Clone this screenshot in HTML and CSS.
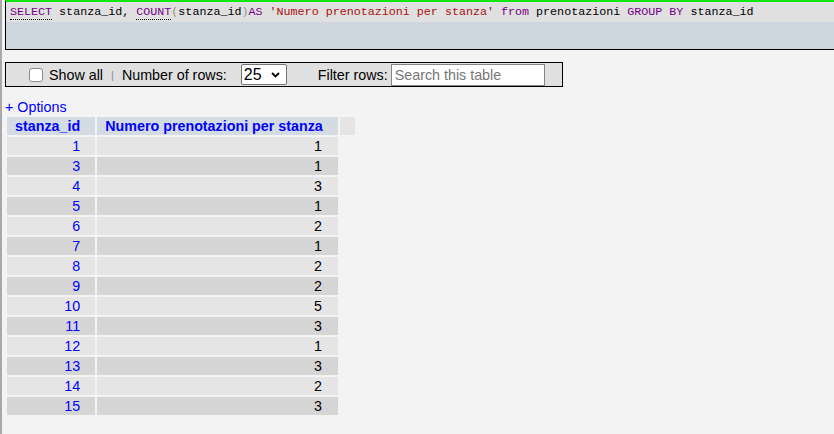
FILE: index.html
```html
<!DOCTYPE html>
<html lang="it">
<head>
<meta charset="utf-8">
<title>SQL result</title>
<link rel="stylesheet" href="styles.css">
</head>
<body>
<div class="page">
  <div class="sql">
    <div class="sql-code"><span class="kw doc">SELECT</span> stanza_id, <span class="kw doc">COUNT</span><span class="br">(</span>stanza_id<span class="br">)</span><span class="kw">AS</span> <span class="str">'Numero prenotazioni per stanza'</span> <span class="kw">from</span> prenotazioni <span class="kw">GROUP</span> <span class="kw">BY</span> stanza_id</div>
    <div class="sql-tools"></div>
  </div>

  <div class="toolbar">
    <input type="checkbox" class="chk" id="showall">
    <label for="showall" class="lbl">Show all</label>
    <span class="sep">|</span>
    <span class="lbl">Number of rows:</span>
    <span class="select-wrap">
      <select class="rows"><option>25</option></select>
      <svg class="chev" width="9" height="6" viewBox="0 0 9 6"><path d="M1 1 L4.5 4.5 L8 1" fill="none" stroke="#000" stroke-width="1.8"/></svg>
    </span>
    <span class="lbl filter">Filter rows:</span>
    <input type="text" class="search" placeholder="Search this table">
  </div>

  <div class="options"><a href="#">+ Options</a></div>

  <table class="result">
    <thead>
      <tr><th>stanza_id</th><th>Numero prenotazioni per stanza</th><th class="extra"></th></tr>
    </thead>
    <tbody>
      <tr><td class="id">1</td><td>1</td></tr>
      <tr><td class="id">3</td><td>1</td></tr>
      <tr><td class="id">4</td><td>3</td></tr>
      <tr><td class="id">5</td><td>1</td></tr>
      <tr><td class="id">6</td><td>2</td></tr>
      <tr><td class="id">7</td><td>1</td></tr>
      <tr><td class="id">8</td><td>2</td></tr>
      <tr><td class="id">9</td><td>2</td></tr>
      <tr><td class="id">10</td><td>5</td></tr>
      <tr><td class="id">11</td><td>3</td></tr>
      <tr><td class="id">12</td><td>1</td></tr>
      <tr><td class="id">13</td><td>3</td></tr>
      <tr><td class="id">14</td><td>2</td></tr>
      <tr><td class="id">15</td><td>3</td></tr>
    </tbody>
  </table>
</div>
</body>
</html>
```

FILE: styles.css
```css
html, body {
  margin: 0;
  padding: 0;
}
body {
  background: #f3f3f3;
  font-family: "Liberation Sans", Arial, sans-serif;
  font-size: 14.3px;
  color: #000;
}
.page {
  border-left: 2px solid #a8a8a8;
  padding-left: 3px;
  min-height: 434px;
  box-sizing: border-box;
}

/* SQL box */
.sql {
  border-top: 2px solid #11e711;
  border-left: 1px solid #000;
  border-bottom: 1px solid #000;
}
.sql-code {
  background: #e0e0e0;
  height: 20px;
  line-height: 20px;
  padding-left: 4px;
  font-family: "Liberation Mono", "Courier New", monospace;
  font-size: 11.7px;
  white-space: pre;
  color: #000;
}
.sql-code .kw { color: #770088; }
.sql-code .doc {
  border-bottom: 1px dotted #000;
}
.sql-code .str { color: #aa1111; }
.sql-code .br { color: #999977; }
.sql-tools {
  background: #cdd6de;
  height: 27px;
}

/* toolbar */
.toolbar {
  margin-top: 12px;
  width: 558px;
  height: 25px;
  box-sizing: border-box;
  border: 1px solid #000;
  background: #e0e0e0;
  display: flex;
  align-items: center;
  padding-left: 23px;
}
.chk {
  appearance: none;
  -webkit-appearance: none;
  width: 14px;
  height: 14px;
  margin: 0 6px 0 0;
  border: 1px solid #8c8c8c;
  border-radius: 3px;
  background: #fff;
  box-sizing: border-box;
}
.lbl {
  font-size: 14.3px;
  white-space: nowrap;
}
.sep {
  font-size: 11px;
  color: #8a8a8a;
  margin: 0 8px 0 8px;
}
.select-wrap {
  position: relative;
  margin-left: 14px;
  display: inline-flex;
}
.rows {
  appearance: none;
  -webkit-appearance: none;
  width: 46px;
  height: 21px;
  border: 1px solid #767676;
  border-radius: 2px;
  background: #fff;
  font-family: "Liberation Sans", Arial, sans-serif;
  font-size: 16px;
  padding: 0 0 0 2px;
  margin: 0;
  color: #000;
  line-height: 19px;
}
.chev {
  position: absolute;
  right: 7px;
  top: 8px;
}
.filter {
  margin-left: 31px;
}
.search {
  margin-left: 3px;
  width: 154px;
  height: 22px;
  box-sizing: border-box;
  border: 1px solid #858585;
  background: #fff;
  padding: 0 3px;
  font-family: "Liberation Sans", Arial, sans-serif;
  font-size: 14.3px;
}
.search::placeholder {
  color: #767676;
}

/* options */
.options {
  margin-top: 12px;
  line-height: 16px;
  font-size: 14.3px;
}
.options a {
  color: #0000ff;
  text-decoration: none;
}

/* result table */
.result {
  border-collapse: separate;
  border-spacing: 2px;
  font-size: 14.3px;
}
.result th {
  background: #d3dce3;
  color: #0000ff;
  font-weight: bold;
  text-align: left;
  height: 18px;
  line-height: 18px;
  padding: 0 15px 0 8px;
  white-space: nowrap;
}
.result th.extra {
  background: #e5e5e5;
  width: 15px;
  padding: 0;
}
.result td {
  height: 18px;
  line-height: 18px;
  padding: 0 16px 0 8px;
  text-align: right;
}
.result td.id {
  color: #0000ff;
  padding-right: 15px;
}
.result tbody tr:nth-child(odd) td { background: #e5e5e5; }
.result tbody tr:nth-child(even) td { background: #d5d5d5; }
```
